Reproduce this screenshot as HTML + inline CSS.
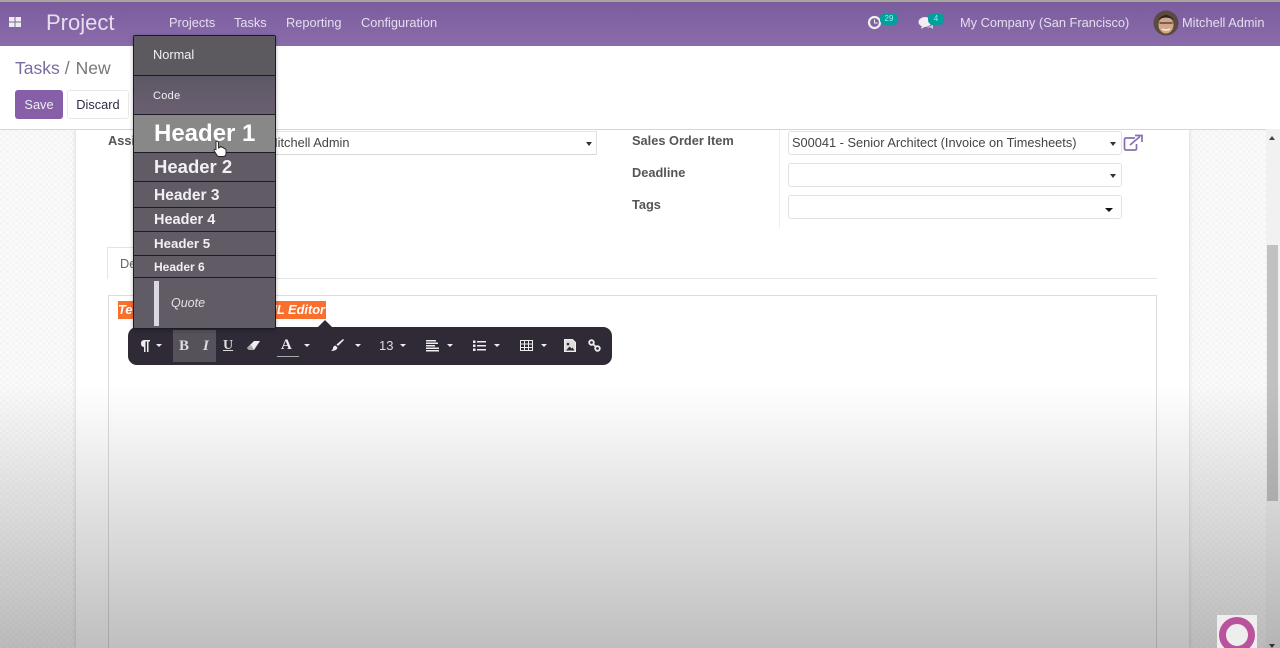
<!DOCTYPE html>
<html><head><meta charset="utf-8"><style>
*{box-sizing:border-box}
html,body{margin:0;padding:0;width:1280px;height:648px;overflow:hidden;background:#fff;font-family:"Liberation Sans",sans-serif;font-size:12.8px;color:#4c4c4c}
.a{position:absolute;white-space:nowrap}
#nav{left:0;top:0;width:1280px;height:46px;background:linear-gradient(#7b5d9e,#8a6cab);border-top:2px solid #a8a59f;color:#e6deee}
.bg{left:0;top:129px;width:1266px;height:519px;background-color:#fafafa;background-image:linear-gradient(45deg,#f5f5f5 25%,transparent 25%,transparent 75%,#f5f5f5 75%),linear-gradient(45deg,#f5f5f5 25%,transparent 25%,transparent 75%,#f5f5f5 75%);background-size:6px 6px;background-position:0 0,3px 3px}
.sheet{left:76px;top:129px;width:1113px;height:519px;background:#fff;box-shadow:0 0 4px rgba(120,120,140,.3)}
.lbl{font-weight:bold;color:#555}
.inp{height:24px;background:#fff;border:1px solid #e2e2e2;border-radius:3px}
.car{position:absolute;width:0;height:0;border-left:3.500px solid transparent;border-right:3.500px solid transparent;border-top:4px solid #333}
#menu{left:133px;top:35px;width:143px;height:294px;background:#615b66;border:1px solid #1e1b24;border-radius:2px;color:#f2f0f4;box-shadow:0 1px 4px rgba(0,0,0,.3)}
.it{position:absolute;left:0;width:141px;border-bottom:1px solid #1e1b24;font-weight:bold;padding-left:20px}
#tb{left:128px;top:327px;width:484px;height:38px;background:#2f2a36;border-radius:9px;color:#eee}
.wc{position:absolute;width:0;height:0;border-left:3.500px solid transparent;border-right:3.500px solid transparent;border-top:3.500px solid #eee;top:17px}
#ov{left:0;top:385px;width:1280px;height:263px;background:linear-gradient(rgba(0,0,0,0),rgba(0,0,0,.25));pointer-events:none}
</style></head><body>
<div class="a bg"></div>
<div class="a sheet"></div>

<div class="a" id="nav">
 <svg class="a" style="left:9px;top:15px" width="12" height="11"><rect x="0" y="0" width="5.500" height="4.500" fill="#eee"/><rect x="6.500" y="0" width="5.500" height="4.500" fill="#eee"/><rect x="0" y="5.500" width="5.500" height="4.500" fill="#eee"/><rect x="6.500" y="5.500" width="5.500" height="4.500" fill="#eee"/></svg>
 <div class="a" style="left:46px;top:8px;font-size:22px;">Project</div>
 <div class="a" style="left:169px;top:13px">Projects</div>
 <div class="a" style="left:234px;top:13px">Tasks</div>
 <div class="a" style="left:286px;top:13px">Reporting</div>
 <div class="a" style="left:361px;top:13px">Configuration</div>
 <svg class="a" style="left:867px;top:13px" width="15" height="15"><circle cx="7.500" cy="7.500" r="5.500" fill="none" stroke="#eee" stroke-width="2.200"/><path d="M7.500 4.500V8H10.500" fill="none" stroke="#eee"/></svg>
 <div class="a" style="left:880px;top:11px;width:18px;height:12px;background:#00a09d;border-radius:5px;font-size:8px;text-align:center;line-height:11px;color:#9ee">29</div>
 <svg class="a" style="left:918px;top:14px" width="17" height="14"><ellipse cx="7" cy="6" rx="6.500" ry="5" fill="#f0eef2"/><path d="M4 10L3 13L8 10Z" fill="#f0eef2"/><path d="M9 11.500H13L15 13V9" fill="#d8d0e0"/></svg>
 <div class="a" style="left:928px;top:11px;width:16px;height:12px;background:#00a09d;border-radius:5px;font-size:8px;text-align:center;line-height:11px;color:#9ee">4</div>
 <div class="a" style="left:960px;top:13px">My Company (San Francisco)</div>
 <svg class="a" style="left:1153px;top:8px" width="26" height="26"><circle cx="13" cy="13" r="12.500" fill="#5a4a40"/><ellipse cx="13" cy="15" rx="7.500" ry="8.500" fill="#d3a788"/><path d="M5 10Q13 0 21 10L19 9Q13 6 7 9Z" fill="#2e221c"/><path d="M6.500 13H19.500" stroke="#333" stroke-width="1.200"/><path d="M9 19Q13 21 17 19" stroke="#f4eee8" stroke-width="1.500" fill="none"/></svg>
 <div class="a" style="left:1182px;top:13px">Mitchell Admin</div>
</div>

<div class="a" style="left:0;top:46px;width:1280px;height:84px;background:#fff;border-bottom:1px solid #d6d6d6"></div>
<div class="a" style="left:15px;top:58px;font-size:17.500px;color:#7c6ba0">Tasks<span style="color:#777;margin-left:5px">/</span><span style="color:#777;margin-left:6px">New</span></div>
<div class="a" style="left:15px;top:90px;width:48px;height:29px;background:#875fa8;border-radius:3px;color:#eee;text-align:center;line-height:29px">Save</div>
<div class="a" style="left:67px;top:90px;width:62px;height:29px;background:#fff;border:1px solid #e8e8e8;border-radius:3px;color:#2c2c44;text-align:center;line-height:28px">Discard</div>

<div class="a lbl" style="left:108px;top:133px">Assigned to</div>
<div class="a" style="left:265px;top:154px;width:332px;height:1px;background:#d8d8d8"></div>
<div class="a" style="left:265px;top:131px;width:332px;height:1px;background:#e4e4e4"></div>
<div class="a" style="left:596px;top:131px;width:1px;height:24px;background:#e0e0e0"></div>
<div class="a" style="left:267px;top:135px;color:#444">Mitchell Admin</div>
<div class="car" style="left:586px;top:142px"></div>

<div class="a lbl" style="left:632px;top:133px">Sales Order Item</div>
<div class="a lbl" style="left:632px;top:165px">Deadline</div>
<div class="a lbl" style="left:632px;top:197px">Tags</div>
<div class="a" style="left:779px;top:130px;width:1px;height:98px;background:#eeeeee"></div>
<div class="a inp" style="left:788px;top:131px;width:334px"></div>
<div class="a" style="left:792px;top:135px;color:#444">S00041 - Senior Architect (Invoice on Timesheets)</div>
<div class="car" style="left:1110px;top:142px"></div>
<svg class="a" style="left:1123px;top:134px" width="21" height="18" fill="none" stroke="#8a6fb0" stroke-width="1.700"><path d="M12 4H3Q1.500 4 1.500 5.500V14.500Q1.500 16 3 16H12Q13.500 16 13.500 14.500V10"/><path d="M7 11L17 2.500"/><path d="M12 1.500H19V8" /></svg>
<div class="a inp" style="left:788px;top:163px;width:334px"></div>
<div class="car" style="left:1110px;top:174px"></div>
<div class="a inp" style="left:788px;top:195px;width:334px"></div>
<div class="car" style="left:1105px;top:208px;border-left-width:4px;border-right-width:4px;border-top-color:#111"></div>

<div class="a" style="left:107px;top:247px;width:40px;height:32px;border:1px solid #e4e4e4;border-bottom:0;background:#fff"></div>
<div class="a" style="left:120px;top:256px;color:#666">Description</div>
<div class="a" style="left:147px;top:278px;width:1010px;height:1px;background:#e4e4e4"></div>
<div class="a" style="left:108px;top:295px;width:1049px;height:353px;border:1px solid #dcdcdc;border-bottom:0;background:#fff"></div>
<div class="a" style="left:118px;top:301px;width:208px;height:18px;background:#fb6f2c;color:#fff;font-style:italic;font-weight:bold;line-height:18px;overflow:hidden"><span style="position:absolute;left:0">Te</span><span style="position:absolute;right:1px">HTML Editor</span></div>

<div class="a" id="tb">
 <div class="a" style="left:45px;top:3px;width:43px;height:32px;background:#56525b"></div>
 <svg class="a" style="left:12px;top:13px" width="10" height="12" fill="#eee"><path d="M1 3.500Q1 0 4.500 0H10V1.500H8.500V12H7V1.500H5.500V12H4V7Q1 7 1 3.500Z"/></svg>
 <div class="wc" style="left:28px"></div>
 <div class="a" style="left:51px;top:11px;font:bold 15px 'Liberation Serif',serif;color:#ddd">B</div>
 <div class="a" style="left:75px;top:11px;font:italic bold 15px 'Liberation Serif',serif;color:#ddd">I</div>
 <div class="a" style="left:95px;top:11px;font:bold 14px 'Liberation Serif',serif;color:#ddd;text-decoration:underline">U</div>
 <svg class="a" style="left:118px;top:13px" width="15" height="12"><path d="M1 8L8 1H14L8 10H3Z" fill="#eee"/><path d="M1 8L5 5L8 10H3Z" fill="#aaa"/></svg>
 <div class="a" style="left:153px;top:10px;font:bold 15px 'Liberation Serif',serif;color:#eee">A</div>
 <div class="a" style="left:149px;top:29px;width:22px;height:1px;background:#aaa"></div>
 <div class="wc" style="left:176px"></div>
 <svg class="a" style="left:202px;top:11px" width="15" height="15"><path d="M13 1L14 2L8 8L6.500 6.500Z" fill="#eee"/><path d="M5.500 7.500L7.500 9.500Q7 13 1 13Q3.500 11 3 9.500Q3.500 8 5.500 7.500Z" fill="#eee"/></svg>
 <div class="wc" style="left:227px"></div>
 <div class="a" style="left:251px;top:11px;font-size:13px;color:#ddd">13</div>
 <div class="wc" style="left:272px"></div>
 <svg class="a" style="left:298px;top:13px" width="13" height="12" fill="#eee"><rect width="10" height="1.500"/><rect y="2.500" width="12" height="1.500"/><rect y="5" width="9" height="1.500"/><rect y="7.500" width="13" height="1.500"/><rect y="10" width="13" height="1.500"/></svg>
 <div class="wc" style="left:319px"></div>
 <svg class="a" style="left:345px;top:13px" width="13" height="12" fill="#eee"><rect y=".5" width="2.500" height="2.500"/><rect y="4.500" width="2.500" height="2.500"/><rect y="8.500" width="2.500" height="2.500"/><rect x="4" y="1" width="9" height="1.500"/><rect x="4" y="5" width="9" height="1.500"/><rect x="4" y="9" width="9" height="1.500"/></svg>
 <div class="wc" style="left:366px"></div>
 <svg class="a" style="left:392px;top:13px" width="13" height="12" fill="none" stroke="#eee"><rect x=".5" y=".5" width="12" height="10"/><path d="M.5 4H12.500M.5 7.500H12.500M4.500 .5V10.500M8.500 .5V10.500"/></svg>
 <div class="wc" style="left:413px"></div>
 <svg class="a" style="left:436px;top:12px" width="12" height="13"><path d="M.5 .5H8.500L11.500 3.500V12.500H.5Z" fill="#ddd" stroke="#eee"/><circle cx="4" cy="5" r="1.300" fill="#2f2a36"/><path d="M2 11.500L5.500 7.500L7.500 9.500L8.500 8.500L10.500 11.500Z" fill="#2f2a36"/></svg>
 <svg class="a" style="left:460px;top:12px" width="13" height="13" fill="none" stroke="#eee" stroke-width="1.800"><circle cx="3.500" cy="3.500" r="2.300"/><circle cx="9.500" cy="9.500" r="2.300"/><path d="M5.200 5.200L7.800 7.800"/></svg>
</div>
<div class="a" style="left:318px;top:320px;width:0;height:0;border-left:7px solid transparent;border-right:7px solid transparent;border-bottom:7px solid #2f2a36"></div>

<div class="a" id="menu">
 <div class="it" style="top:0;height:40px;background:#5c5a5e;font-weight:normal;font-size:12.800px;line-height:38px;padding-left:19px">Normal</div>
 <div class="it" style="top:40px;height:39px;background:linear-gradient(#5e5866,#6a5f70);font-weight:normal;font-size:11px;line-height:41px;letter-spacing:.3px;padding-left:19px">Code</div>
 <div class="it" style="top:79px;height:38px;background:#898888;font-size:24px;line-height:38px;color:#fff">Header 1</div>
 <div class="it" style="top:117px;height:29px;font-size:18.500px;line-height:27px">Header 2</div>
 <div class="it" style="top:146px;height:26px;font-size:15.500px;line-height:28px">Header 3</div>
 <div class="it" style="top:172px;height:24px;font-size:14.500px;line-height:24px">Header 4</div>
 <div class="it" style="top:196px;height:24px;font-size:13.300px;line-height:24px">Header 5</div>
 <div class="it" style="top:220px;height:22px;font-size:12px;line-height:23px">Header 6</div>
 <div class="a" style="left:20px;top:245px;width:5px;height:45px;background:#dcd8e2"></div>
 <div class="a" style="left:37px;top:260px;font-style:italic;color:#e2e0e4;font-size:12.500px">Quote</div>
</div>
<svg class="a" style="left:212px;top:140px" width="16" height="18"><path d="M4 1.500Q5.500 .5 6.500 2V8L8 7.500V6.500Q9.500 6 10 7.500Q11.500 7 12 8.500Q13.500 8.500 14 10V14Q13.500 16.500 11 16.500H7Q5.500 16.500 4.500 14.500L2 10.500Q2 9 4 9.500Z" fill="#fff" stroke="#222" stroke-width=".9"/></svg>

<div class="a" style="left:1266px;top:129px;width:14px;height:519px;background:#f1f1f1"></div>
<div class="a" style="left:1267px;top:245px;width:11px;height:256px;background:#c1c1c1"></div>
<div class="a" style="left:1269px;top:136px;width:0;height:0;border-left:3.500px solid transparent;border-right:3.500px solid transparent;border-bottom:4px solid #444"></div>
<div class="a" id="ov"></div>
<div class="a" style="left:1269px;top:644px;width:0;height:0;border-left:3.500px solid transparent;border-right:3.500px solid transparent;border-top:4px solid #333"></div>
<div class="a" style="left:1217px;top:615px;width:40px;height:33px;background:#eee;overflow:hidden"><div class="a" style="left:2px;top:2px;width:36px;height:36px;border:7px solid #b9539d;border-radius:50%"></div></div>
</body></html>
